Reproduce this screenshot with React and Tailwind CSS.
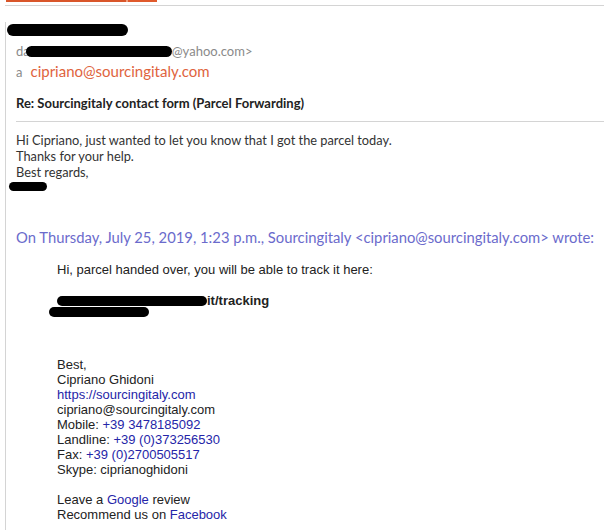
import React from 'react';

function Blob({ className }) {
  return <span className={`inline-block rounded-full bg-black align-middle ${className}`} />;
}

function Link({ children }) {
  return <span className="text-[#2525a8]">{children}</span>;
}

export default function App() {
  return (
    <div className="relative h-[530px] w-[604px] overflow-hidden bg-white font-['Lato',sans-serif]">
      {/* top tab strip */}
      <div className="flex h-[2px] pl-[6px]">
        <div className="w-[120px] bg-[#d9562a]" />
        <div className="w-[2px] bg-[#f0a080]" />
        <div className="w-[29px] bg-[#e05a2c]" />
      </div>
      <div className="ml-[5px] mt-[3px] h-[1px] bg-[#d4d4d4]" />

      <div className="ml-[5px] h-[524px] border-l border-[#d4d4d4] pl-[10px]">
        {/* sender */}
        <div className="relative mt-[16px] h-[18px]">
          <div className="absolute left-[-9px] top-[2px] h-[12px] w-[121px] rounded-full bg-black" />
        </div>
        <div className="mt-[3px] flex items-center text-[13px] leading-[16px] text-[#8a8a8a]">
          <span>da</span>
          <Blob className="ml-[-4px] h-[11px] w-[146px]" />
          <span>@yahoo.com&gt;</span>
        </div>
        <div className="mt-[3px] flex items-baseline text-[13px] leading-[18px]">
          <span className="text-[#8a8a8a]">a</span>
          <span className="ml-[8px] text-[15px] text-[#e0643e]">cipriano@sourcingitaly.com</span>
        </div>

        {/* subject */}
        <div className="mt-[14px] text-[13px] font-bold leading-[16px] text-[#222]">
          Re: Sourcingitaly contact form (Parcel Forwarding)
        </div>
        <div className="mt-[10px] h-[1px] bg-[#d4d4d4]" />

        {/* reply body */}
        <div className="mt-[10px] text-[12.8px] leading-[16px] text-[#333]">
          <div>Hi Cipriano, just wanted to let you know that I got the parcel today.</div>
          <div>Thanks for your help.</div>
          <div>Best regards,</div>
        </div>
        <div className="ml-[-7px] mt-[2px] h-[9px] w-[38px] rounded-full bg-black" />

        {/* quote header */}
        <div className="mt-[37px] whitespace-nowrap text-[14.8px] leading-[18px] text-[#6b6bcc]">
          On Thursday, July 25, 2019, 1:23 p.m., Sourcingitaly &lt;cipriano@sourcingitaly.com&gt; wrote:
        </div>

        {/* quoted message */}
        <div className="ml-[41px] mt-[16px] font-['Liberation_Sans',Arial,sans-serif] text-[13px] leading-[15px] text-[#222]">
          <div>Hi, parcel handed over, you will be able to track it here:</div>
          <div className="mt-[16px] flex items-center font-bold">
            <Blob className="h-[10px] w-[150px]" />
            <span>it/tracking</span>
          </div>
          <div className="ml-[-8px] mt-[-1px] h-[10px] w-[100px] rounded-full bg-black" />

          <div className="mt-[40px]">
            <div>Best,</div>
            <div>Cipriano Ghidoni</div>
            <div><Link>https://sourcingitaly.com</Link></div>
            <div>cipriano@sourcingitaly.com</div>
            <div>Mobile: <Link>+39 3478185092</Link></div>
            <div>Landline: <Link>+39 (0)373256530</Link></div>
            <div>Fax: <Link>+39 (0)2700505517</Link></div>
            <div>Skype: ciprianoghidoni</div>
            <div className="mt-[15px]">Leave a <Link>Google</Link> review</div>
            <div>Recommend us on <Link>Facebook</Link></div>
          </div>
        </div>
      </div>
    </div>
  );
}
